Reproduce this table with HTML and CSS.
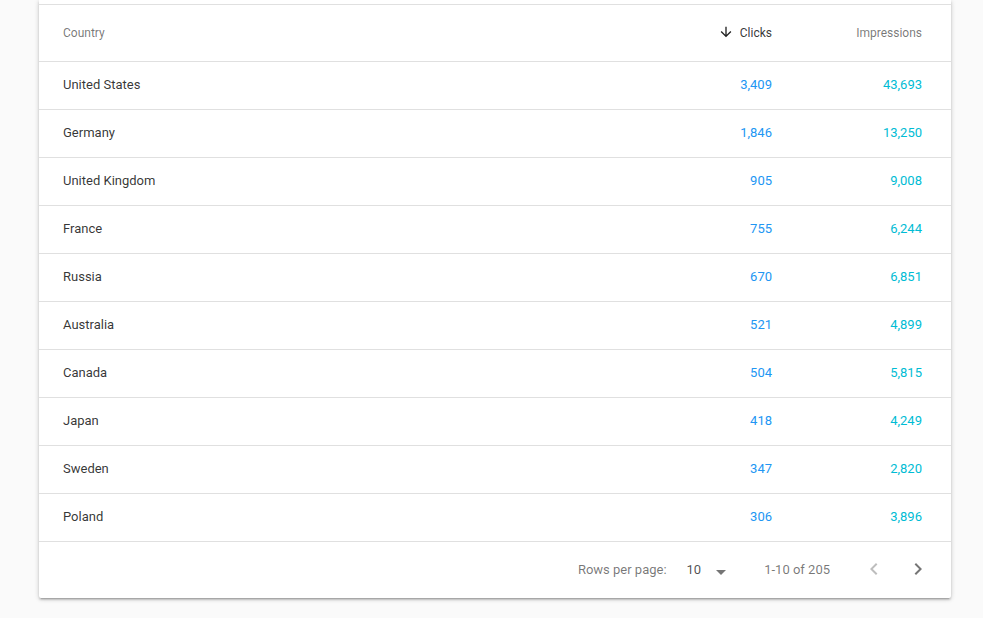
FILE: index.html
```html
<!DOCTYPE html>
<html>
<head>
<meta charset="utf-8">
<link rel="stylesheet" href="styles.css">
</head>
<body>
<div class="page">
  <div class="card">
    <div class="toolbar"></div>
    <div class="row head">
      <div class="cell">Country</div>
      <div class="cell num sorted">
        <svg class="sort-icon" viewBox="0 0 24 24"><path d="M20 12l-1.41-1.41L13 16.17V4h-2v12.17l-5.58-5.59L4 12l8 8 8-8z"/></svg>
        <span>Clicks</span>
      </div>
      <div class="cell num last">Impressions</div>
    </div>
    <div class="row"><div class="cell">United States</div><div class="cell num clicks">3,409</div><div class="cell num last impr">43,693</div></div>
    <div class="row"><div class="cell">Germany</div><div class="cell num clicks">1,846</div><div class="cell num last impr">13,250</div></div>
    <div class="row"><div class="cell">United Kingdom</div><div class="cell num clicks">905</div><div class="cell num last impr">9,008</div></div>
    <div class="row"><div class="cell">France</div><div class="cell num clicks">755</div><div class="cell num last impr">6,244</div></div>
    <div class="row"><div class="cell">Russia</div><div class="cell num clicks">670</div><div class="cell num last impr">6,851</div></div>
    <div class="row"><div class="cell">Australia</div><div class="cell num clicks">521</div><div class="cell num last impr">4,899</div></div>
    <div class="row"><div class="cell">Canada</div><div class="cell num clicks">504</div><div class="cell num last impr">5,815</div></div>
    <div class="row"><div class="cell">Japan</div><div class="cell num clicks">418</div><div class="cell num last impr">4,249</div></div>
    <div class="row"><div class="cell">Sweden</div><div class="cell num clicks">347</div><div class="cell num last impr">2,820</div></div>
    <div class="row"><div class="cell">Poland</div><div class="cell num clicks">306</div><div class="cell num last impr">3,896</div></div>
    <div class="footer">
      <span class="caption">Rows per page:</span>
      <div class="select">
        <span class="select-value">10</span>
        <svg class="icon drop" viewBox="0 0 24 24"><path d="M7 10l5 5 5-5z"/></svg>
      </div>
      <span class="caption range">1-10 of 205</span>
      <svg class="icon prev" viewBox="0 0 24 24"><path d="M15.41 7.41L14 6l-6 6 6 6 1.41-1.41L10.83 12z"/></svg>
      <svg class="icon next" viewBox="0 0 24 24"><path d="M10 6L8.59 7.41 13.17 12l-4.58 4.59L10 18l6-6z"/></svg>
    </div>
  </div>
</div>
</body>
</html>
```

FILE: styles.css
```css
* { box-sizing: border-box; }
html, body {
  margin: 0;
  padding: 0;
  background: #fafafa;
  font-family: Roboto, "Noto Sans", "Liberation Sans", sans-serif;
}
.page {
  padding-left: 39px;
  height: 618px;
  overflow: hidden;
}
.card {
  width: 912px;
  background: #fff;
  box-shadow: 0 1px 5px rgba(0,0,0,0.2), 0 2px 2px rgba(0,0,0,0.14), 0 3px 1px -2px rgba(0,0,0,0.12);
  border-radius: 0 0 2px 2px;
}
.toolbar {
  height: 5px;
  border-bottom: 1px solid #e0e0e0;
}
.row {
  display: grid;
  grid-template-columns: 1fr 150px 123px;
  height: 48px;
  border-bottom: 1px solid #e0e0e0;
  font-size: 13px;
  color: rgba(0,0,0,0.8);
}
.row.head {
  height: 57px;
  font-size: 12px;
  font-weight: 400;
  color: rgba(0,0,0,0.54);
}
.cell {
  display: flex;
  align-items: center;
  padding: 0 24px 2px;
}
.head .cell {
  padding-bottom: 0;
}
.cell.num {
  justify-content: flex-end;
  padding-right: 56px;
}
.cell.num.last {
  padding-right: 29px;
}
.sorted {
  color: rgba(0,0,0,0.8);
}
.sort-icon {
  width: 16px;
  height: 16px;
  margin-right: 6px;
  margin-top: -2px;
  fill: rgba(0,0,0,0.87);
}
.clicks { color: #2196f3; }
.impr { color: #00bcd4; }
.footer {
  height: 56px;
  display: flex;
  align-items: center;
  justify-content: flex-end;
  padding-right: 21px;
  padding-bottom: 2px;
  font-size: 13px;
  color: rgba(0,0,0,0.54);
}
.select {
  display: flex;
  align-items: center;
  margin-left: 20px;
}
.select-value {
  font-size: 13px;
  color: rgba(0,0,0,0.7);
}
.icon {
  width: 24px;
  height: 24px;
  fill: rgba(0,0,0,0.54);
}
.drop {
  margin-left: 8px;
  margin-top: 6px;
}
.range {
  margin-left: 31px;
}
.prev {
  margin-left: 32px;
  fill: rgba(0,0,0,0.26);
}
.next {
  margin-left: 20px;
}
```
